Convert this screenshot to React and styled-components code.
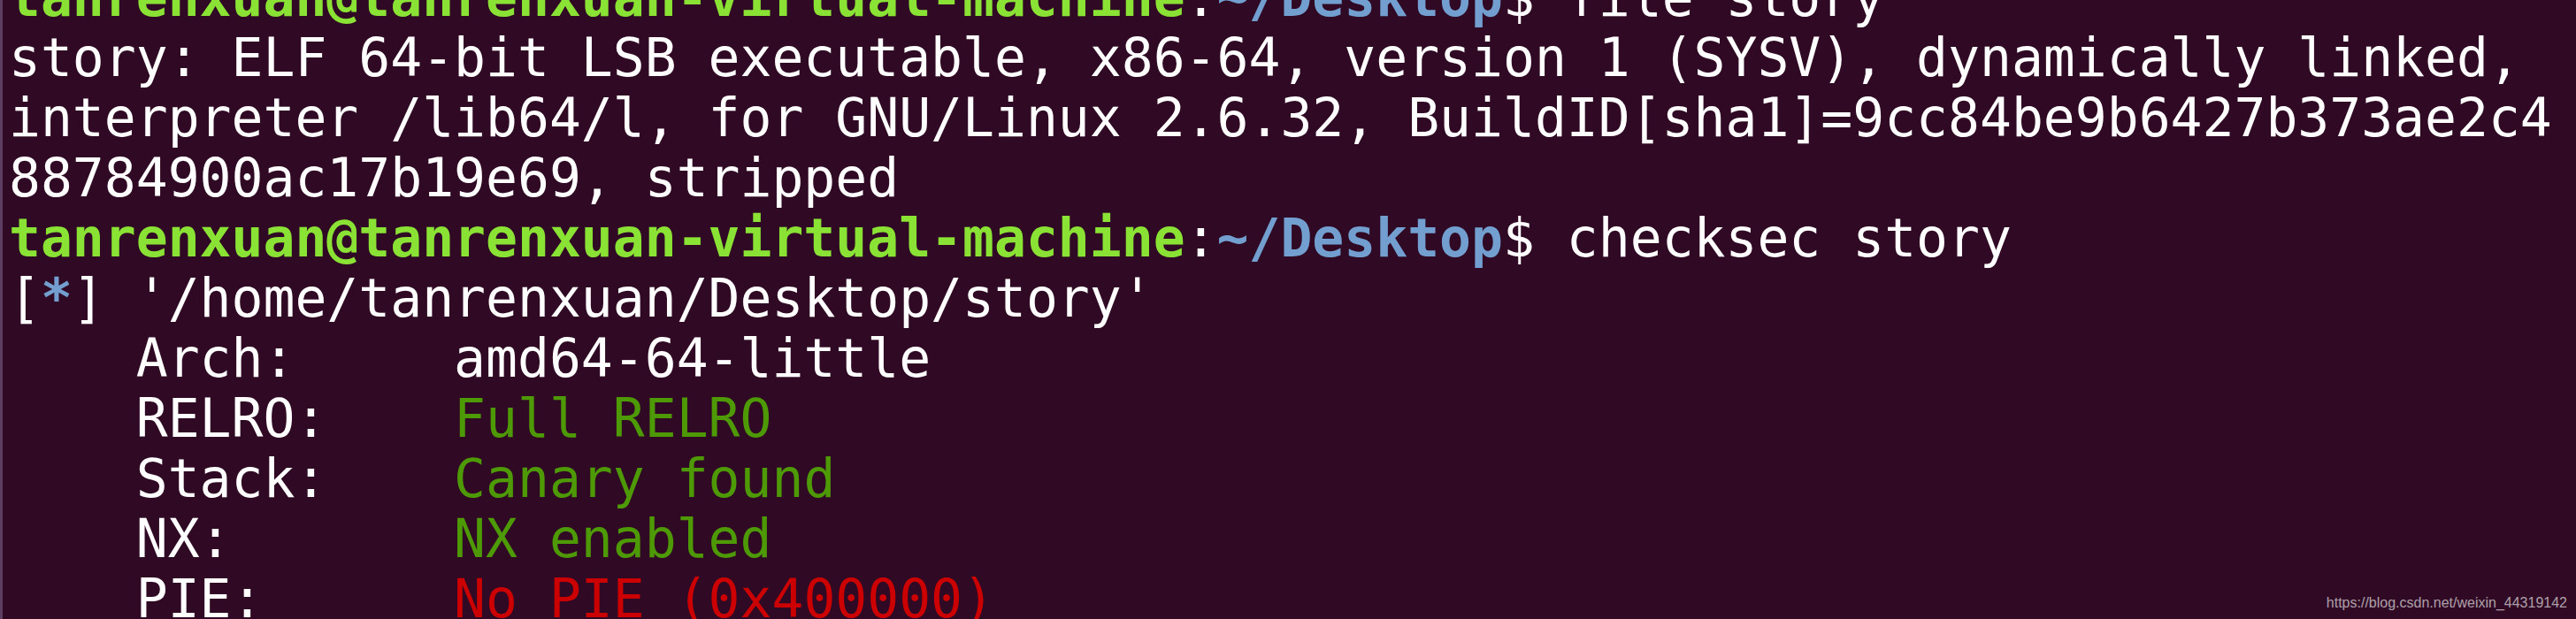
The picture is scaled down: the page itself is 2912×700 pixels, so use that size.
import React from 'react'
import styled, { createGlobalStyle } from 'styled-components'

const GlobalStyle = createGlobalStyle`
  html, body {
    margin: 0;
    padding: 0;
    background: #300a24;
  }
`;

const colors = {
  text: '#ffffff',
  user: '#8ae234',
  path: '#729fcf',
  good: '#4e9a06',
  bad: '#cc0000',
  info: '#729fcf',
};

export default function App() {
  const checks = [
    { key: 'Arch:', value: 'amd64-64-little', tone: 'text' },
    { key: 'RELRO:', value: 'Full RELRO', tone: 'good' },
    { key: 'Stack:', value: 'Canary found', tone: 'good' },
    { key: 'NX:', value: 'NX enabled', tone: 'good' },
    { key: 'PIE:', value: 'No PIE (0x400000)', tone: 'bad' },
  ];

  return (
    <React.Fragment>
      <GlobalStyle />
      <Window>
        <Screen>
          <Prompt command="file story" />
          <Line>story: ELF 64-bit LSB executable, x86-64, version 1 (SYSV), dynamically linked,</Line>
          <Line>interpreter /lib64/l, for GNU/Linux 2.6.32, BuildID[sha1]=9cc84be9b6427b373ae2c4</Line>
          <Line>88784900ac17b19e69, stripped</Line>
          <Prompt command="checksec story" />
          <Line>
            [<Seg tone="info" bold>*</Seg>] '/home/tanrenxuan/Desktop/story'
          </Line>
          {checks.map((c) => (
            <Line key={c.key}>
              {'    ' + c.key.padEnd(10, ' ')}
              <Seg tone={c.tone}>{c.value}</Seg>
            </Line>
          ))}
        </Screen>
        <Watermark>https://blog.csdn.net/weixin_44319142</Watermark>
      </Window>
    </React.Fragment>
  )
}

function Prompt({ command }) {
  return (
    <Line>
      <Seg tone="user" bold>tanrenxuan@tanrenxuan-virtual-machine</Seg>
      :
      <Seg tone="path" bold>~/Desktop</Seg>
      $ {command}
    </Line>
  )
}

const Window = styled.div`
  position: relative;
  width: 2912px;
  height: 700px;
  overflow: hidden;
  background: #300a24;
  border-left: 3px solid #5e3d63;
  box-sizing: border-box;
`;

const Screen = styled.div`
  display: flex;
  flex-direction: column;
  margin-top: -35.6px;
  padding-left: 7px;
  font-family: "DejaVu Sans Mono", "Liberation Mono", monospace;
  font-size: 59.7px;
  line-height: 68px;
  color: ${colors.text};
`;

const Line = styled.div`
  white-space: pre;
  height: 68px;
`;

const Seg = styled.span`
  color: ${(p) => colors[p.tone]};
  font-weight: ${(p) => (p.bold ? 700 : 400)};
`;

const Watermark = styled.div`
  position: absolute;
  right: 10px;
  bottom: 10px;
  font-family: "Liberation Sans", Arial, sans-serif;
  font-size: 16px;
  line-height: 16px;
  color: rgba(255, 255, 255, 0.62);
`;
